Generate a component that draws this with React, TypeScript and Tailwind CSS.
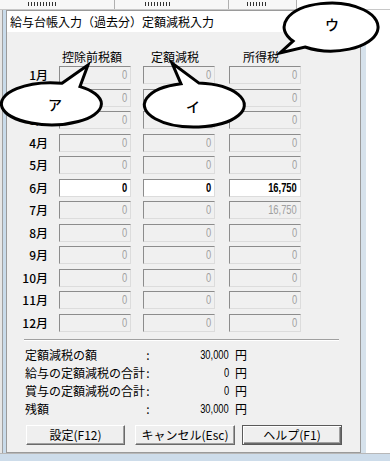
import React from 'react';

const months = ['1月', '2月', '3月', '4月', '5月', '6月', '7月', '8月', '9月', '10月', '11月', '12月'];

const values: Record<string, [string, string, string]> = {
    '6月': ['0', '0', '16,750'],
    '7月': ['0', '0', '16,750'],
};

const summary = [
    { label: '定額減税の額', value: '30,000' },
    { label: '給与の定額減税の合計', value: '0' },
    { label: '賞与の定額減税の合計', value: '0' },
    { label: '残額', value: '30,000' },
];

function Digits({ text, className = '' }: { text: string; className?: string }) {
    return (
        <span className={`inline-block origin-right scale-x-[0.72] font-['Liberation_Sans',sans-serif] text-[13px] leading-[16px] ${className}`}>
            {text}
        </span>
    );
}

function Field({ text, active }: { text: string; active: boolean }) {
    return (
        <div
            className={`flex h-[18px] w-[72px] items-center justify-end border border-t-[#8c8c8c] border-l-[#8c8c8c] border-r-[#dcdcdc] border-b-[#dcdcdc] pr-[3px] ${
                active ? 'bg-white text-black' : 'bg-[#f0f0f0] text-[#a0a0a0]'
            }`}
        >
            <Digits text={text} className={active ? 'font-bold' : ''} />
        </div>
    );
}

function Button({ label, primary, className = '' }: { label: string; primary?: boolean; className?: string }) {
    return (
        <div
            className={`flex h-[20px] items-center justify-center bg-[#efefef] text-[12px] leading-none text-black ${
                primary
                    ? 'border border-[#5a5a5a] shadow-[inset_1px_1px_0_#ffffff,inset_-1px_-1px_0_#6a6a6a,inset_-2px_-2px_0_#a0a0a0]'
                    : 'border border-t-white border-l-white border-r-[#6a6a6a] border-b-[#6a6a6a] shadow-[inset_-1px_-1px_0_#a0a0a0]'
            } ${className}`}
        >
            {label}
        </div>
    );
}

export default function App() {
    return (
        <div className="relative h-[461px] w-[390px] overflow-hidden bg-white font-['Noto_Sans_CJK_JP',sans-serif] text-black">
            {/* parent window peeking above: only the bottoms of its header glyphs show */}
            <div className="flex h-[10px] border-b border-[#c8c8c8] bg-[#f7f7f7]">
                <div className="w-[115px] border-r border-[#b0b0b0] pl-[28px] pt-[2px]">
                    <div className="h-[4px] w-[30px] bg-[repeating-linear-gradient(90deg,#333_0_1px,transparent_1px_3px)]" />
                </div>
                <div className="w-[114px] border-r border-[#b0b0b0] pl-[30px] pt-[2px]">
                    <div className="h-[4px] w-[26px] bg-[repeating-linear-gradient(90deg,#333_0_1px,transparent_1px_3px)]" />
                </div>
                <div className="w-[68px] border-r border-[#b0b0b0] pl-[18px] pt-[2px]">
                    <div className="h-[4px] w-[20px] bg-[repeating-linear-gradient(90deg,#333_0_1px,transparent_1px_3px)]" />
                </div>
                <div className="flex-1 bg-white" />
            </div>

            <div className="flex h-[443px]">
                <div className="flex w-[6px]">
                    <div className="w-[2px] bg-[#e6e6e6]" />
                    <div className="w-[1px] bg-[#a0a0a0]" />
                    <div className="flex-1 bg-[#c9dbea]" />
                </div>

                <div className="flex w-[355px] flex-col border border-[#9a9a9a]">
                    <div className="h-[21px] bg-white pl-[3px] text-[12px] leading-[21px]">給与台帳入力（過去分）定額減税入力</div>

                    <div className="flex-1 bg-[#f0f0f0] pt-[18px]">
                        <div className="flex pl-[52px] text-[12px] leading-[14px]">
                            <div className="w-[72px] pr-[6px] text-center">控除前税額</div>
                            <div className="ml-[12px] w-[72px] pr-[8px] text-center">定額減税</div>
                            <div className="ml-[14px] w-[72px] pr-[8px] text-center">所得税</div>
                        </div>

                        <div className="mt-[2px] flex flex-col gap-[4.5px]">
                            {months.map((m) => {
                                const v = values[m] ?? ['0', '0', '0'];
                                const active = m === '6月';
                                return (
                                    <div key={m} className="flex h-[18px] items-center">
                                        <div className="w-[41px] text-right text-[12px] font-medium leading-[18px]">{m}</div>
                                        <div className="ml-[11px]">
                                            <Field text={v[0]} active={active} />
                                        </div>
                                        <div className="ml-[12px]">
                                            <Field text={v[1]} active={active} />
                                        </div>
                                        <div className="ml-[14px]">
                                            <Field text={v[2]} active={active} />
                                        </div>
                                    </div>
                                );
                            })}
                        </div>

                        <div className="ml-[17px] mt-[7px] h-[2px] w-[315px] border-t border-b border-t-[#a0a0a0] border-b-white" />

                        <div className="mt-[5px] flex flex-col pl-[18px] text-[12px] leading-[18px]">
                            {summary.map((s) => (
                                <div key={s.label} className="flex h-[18px] items-center">
                                    <div className="w-[118px] whitespace-nowrap">{s.label}</div>
                                    <div className="w-[10px] text-center">:</div>
                                    <div className="flex w-[76px] justify-end">
                                        <Digits text={s.value} />
                                    </div>
                                    <div className="ml-[6px]">円</div>
                                </div>
                            ))}
                        </div>

                        <div className="mt-[7px] flex pl-[19px]">
                            <Button label="設定(F12)" className="w-[99px]" />
                            <Button label="キャンセル(Esc)" className="ml-[10px] w-[100px]" />
                            <Button label="ヘルプ(F1)" primary className="ml-[7px] w-[100px]" />
                        </div>
                    </div>
                </div>

                <div className="w-[5px] bg-[#d6e2ec]" />
                <div className="flex-1 bg-white" />
            </div>

            <div className="h-[8px] border-t border-[#b8b8b8] bg-[#cddcea]" />

            {/* callout balloons */}
            <svg className="pointer-events-none absolute inset-0" width="390" height="461" viewBox="0 0 390 461">
                <g fill="white" stroke="black" strokeWidth="3" strokeLinejoin="miter">
                    <path d="M 62 83.3 L 88 65 L 80 86.6 A 50 21 0 1 1 62 83.3 Z" />
                    <path d="M 181 83.8 L 172 63 L 199 83.1 A 50 22 0 1 1 181 83.8 Z" />
                    <path d="M 293 41.1 L 280 53 L 305 47 A 47 24 0 1 0 293 41.1 Z" />
                </g>
                <g fontFamily="'Noto Sans CJK JP', sans-serif" fontSize="14" fontWeight="500" textAnchor="middle" fill="black">
                    <text x="55" y="110">ア</text>
                    <text x="193" y="112">イ</text>
                    <text x="332" y="30">ウ</text>
                </g>
            </svg>
        </div>
    );
}
